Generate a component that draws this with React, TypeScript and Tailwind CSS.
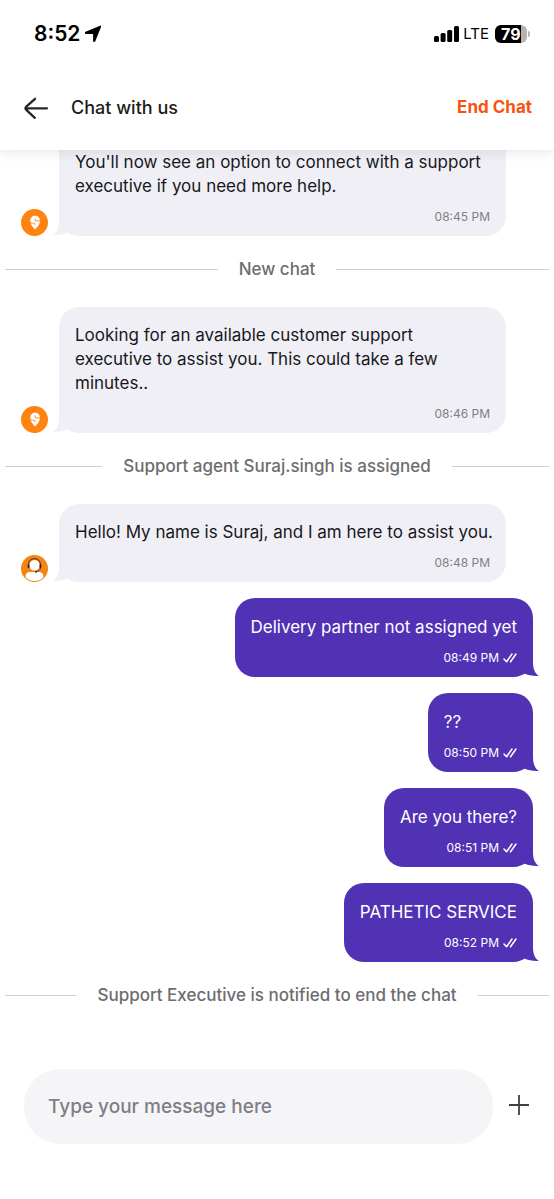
import type { ReactNode } from "react";

type ChatItem =
  | { kind: "divider"; text: string }
  | {
      kind: "incoming";
      text: string;
      time: string;
      from: "bot" | "agent";
      continued?: boolean;
    }
  | { kind: "outgoing"; text: string; time: string };

const CHAT: ChatItem[] = [
  {
    kind: "incoming",
    text: "You'll now see an option to connect with a support executive if you need more help.",
    time: "08:45 PM",
    from: "bot",
    continued: true,
  },
  { kind: "divider", text: "New chat" },
  {
    kind: "incoming",
    text: "Looking for an available customer support executive to assist you. This could take a few minutes..",
    time: "08:46 PM",
    from: "bot",
  },
  { kind: "divider", text: "Support agent Suraj.singh is assigned" },
  {
    kind: "incoming",
    text: "Hello! My name is Suraj, and I am here to assist you.",
    time: "08:48 PM",
    from: "agent",
  },
  { kind: "outgoing", text: "Delivery partner not assigned yet", time: "08:49 PM" },
  { kind: "outgoing", text: "??", time: "08:50 PM" },
  { kind: "outgoing", text: "Are you there?", time: "08:51 PM" },
  { kind: "outgoing", text: "PATHETIC SERVICE", time: "08:52 PM" },
  { kind: "divider", text: "Support Executive is notified to end the chat" },
];

function StatusBar() {
  return (
    <div className="flex h-16 items-center justify-between pt-1 pr-6 pl-[34px] text-black">
      <div className="flex items-center gap-1">
        <span className="text-[21px] font-semibold">8:52</span>
        <svg width="18" height="18" viewBox="0 0 18 18" fill="currentColor">
          <path d="M16 .7c.8-.3 1.400.3 1.100 1.100L11.300 16.300c-.5 1.100-2.200.9-2.200-.4V9.600c0-.4-.2-.6-.6-.6H2C.6 9 .4 7.300 1.600 6.800z" />
        </svg>
      </div>
      <div className="flex items-center gap-1">
        <svg width="25" height="16" viewBox="0 0 25 16" fill="currentColor">
          <rect x="0" y="10" width="5" height="6" rx="1.5" />
          <rect x="6.600" y="7" width="5" height="9" rx="1.500" />
          <rect x="13.200" y="4" width="5" height="12" rx="1.500" />
          <rect x="20" y="0" width="5" height="16" rx="1.500" />
        </svg>
        <span className="text-[15px]">LTE</span>
        <div className="ml-0.5 flex items-center gap-px">
          <div className="flex h-[18px] w-8 overflow-hidden rounded-md bg-[#b4b4b4]">
            <span className="w-[26px] bg-black pl-1.5 text-base leading-[18px] font-bold text-white">
              79
            </span>
          </div>
          <div className="h-1.5 w-0.5 rounded-r-full bg-[#b4b4b4]" />
        </div>
      </div>
    </div>
  );
}

function Header() {
  return (
    <header className="relative z-10 bg-white shadow-[0_2px_12px_rgba(0,0,0,0.10)]">
      <StatusBar />
      <div className="flex h-[86px] items-center px-[22px] pt-0.5">
        <button type="button" aria-label="Back" className="text-[#25262b]">
          <svg
            width="28"
            height="24"
            viewBox="0 0 28 24"
            fill="none"
            stroke="currentColor"
            strokeWidth="2.300"
            strokeLinecap="round"
            strokeLinejoin="round"
          >
            <path d="M25 12.300H3.500M13 2.800L4.300 10.700Q2.600 12.300 4.300 13.900L12.800 21.800" />
          </svg>
        </button>
        <h1 className="ml-[21px] text-lg font-medium text-[#1b1c20]">Chat with us</h1>
        <button type="button" className="ml-auto text-[17px] font-bold text-[#f6540e]">
          End Chat
        </button>
      </div>
    </header>
  );
}

function BotAvatar() {
  return (
    <svg width="27" height="27" viewBox="0 0 27 27" className="shrink-0">
      <circle cx="13.500" cy="13.500" r="13.500" fill="#ff8310" />
      <path
        d="M14 20.600C11.500 18 9.200 15 9.200 11.800C9.200 8.900 11.300 6.800 14.100 6.800S19 8.900 19 11.800C19 15 16.500 18 14 20.600Z"
        fill="#fff"
      />
      <path
        d="M14.200 9.500V11.900H19.500M8.500 13.300C10.500 14.300 12.300 14 13.900 14.400V16"
        fill="none"
        stroke="#ff8310"
        strokeWidth="0.900"
      />
    </svg>
  );
}

function AgentAvatar() {
  return (
    <svg width="27" height="27" viewBox="0 0 27 27" className="shrink-0">
      <circle cx="13.500" cy="13.500" r="13.500" fill="#f58413" />
      <path
        d="M4.700 22.500c-.4-3.900 1.600-5.600 4.600-5.600h8.400c3 0 5 1.700 4.600 5.600-2.200 2.300-5.200 3.600-8.800 3.600s-6.600-1.300-8.800-3.600z"
        fill="#fff"
      />
      <circle cx="13.500" cy="10.300" r="5.300" fill="#fff" />
      <path
        d="M7.600 11.500V9.700C7.600 6 10 3.700 13.500 3.700s5.900 2.300 5.900 6V11.500"
        fill="none"
        stroke="#2a2440"
      />
      <rect x="6.700" y="9" width="1.700" height="4.200" rx="0.800" fill="#2a2440" />
      <rect x="18.600" y="9" width="1.700" height="4.200" rx="0.800" fill="#2a2440" />
      <path
        d="M19.400 13c-.3 2.200-1.800 3.300-4.100 3.600"
        fill="none"
        stroke="#2a2440"
        strokeWidth="0.700"
      />
      <circle cx="15" cy="16.700" r="1" fill="#2a2440" />
    </svg>
  );
}

function Tail({ className }: { className: string }) {
  return (
    <svg
      width="24"
      height="20"
      viewBox="0 0 24 20"
      fill="currentColor"
      className={`absolute bottom-0 ${className}`}
    >
      <path d="M18 0V5C18 11 19.500 16.500 24 19C19 19.300 13 18.600 9 16.600L7 18L2 8Z" />
    </svg>
  );
}

function DoubleTick() {
  return (
    <svg
      width="14"
      height="10"
      viewBox="0 0 14 10"
      fill="none"
      stroke="currentColor"
      strokeWidth="1.500"
      strokeLinecap="round"
      strokeLinejoin="round"
    >
      <path d="M1 6L3.600 8.800L9 1M7.500 8.800L13 1" />
    </svg>
  );
}

function Divider({ children }: { children: ReactNode }) {
  return (
    <div className="flex items-center gap-[21px] px-[5px] pt-[21px] pb-[26px]">
      <div className="h-px flex-1 bg-[#cfcfd1]" />
      <p className="text-[17px] leading-6 font-medium text-[#6c6d70]">{children}</p>
      <div className="h-px flex-1 bg-[#cfcfd1]" />
    </div>
  );
}

function Incoming({ item }: { item: Extract<ChatItem, { kind: "incoming" }> }) {
  return (
    <div className="flex items-end gap-[11px] pr-12 pl-[21px]">
      {item.from === "bot" ? <BotAvatar /> : <AgentAvatar />}
      <div
        className={`relative flex-1 bg-[#f0eff5] pr-3 pb-2.5 pl-4 ${
          item.continued ? "rounded-b-[20px]" : "rounded-[20px] pt-4"
        }`}
      >
        <Tail className="-left-1.5 -scale-x-100 text-[#f0eff5]" />
        <p className="text-[17px] leading-6 text-[#17181c]">{item.text}</p>
        <p className="mt-2.5 pr-1 text-right text-xs leading-[18px] text-[#7e7f85]">
          {item.time}
        </p>
      </div>
    </div>
  );
}

function Outgoing({ item }: { item: Extract<ChatItem, { kind: "outgoing" }> }) {
  return (
    <div className="mt-4 flex justify-end pr-[21px] pl-12">
      <div className="relative rounded-[20px] bg-[#5132b4] px-4 pt-[17px] pb-2.5 text-white">
        <Tail className="-right-1.5 text-[#5132b4]" />
        <p className="text-[17px] leading-6">{item.text}</p>
        <p className="mt-2.5 flex items-center justify-end gap-1 text-xs leading-[18px]">
          {item.time}
          <DoubleTick />
        </p>
      </div>
    </div>
  );
}

export default function App() {
  return (
    <div className="flex min-h-screen flex-col bg-white font-['Inter',sans-serif]">
      <Header />

      <main>
        {CHAT.map((item, i) => {
          if (item.kind === "divider") return <Divider key={i}>{item.text}</Divider>;
          if (item.kind === "incoming") return <Incoming key={i} item={item} />;
          return <Outgoing key={i} item={item} />;
        })}
      </main>

      {/* Composer */}
      <form
        className="mt-9 flex items-center gap-4 pr-[25px] pl-6"
        onSubmit={(e) => e.preventDefault()}
      >
        <input
          type="text"
          aria-label="Message"
          placeholder="Type your message here"
          className="h-[75px] min-w-0 flex-1 rounded-[36px] bg-[#f5f5f8] px-6 text-[19px] font-medium outline-none placeholder:text-[#7d7e87]"
        />
        <button type="button" aria-label="Add attachment" className="pb-1 text-[#3f4046]">
          <svg
            width="20"
            height="20"
            viewBox="0 0 20 20"
            fill="none"
            stroke="currentColor"
            strokeWidth="1.800"
          >
            <path d="M10 0V20M0 10H20" />
          </svg>
        </button>
      </form>
    </div>
  );
}
